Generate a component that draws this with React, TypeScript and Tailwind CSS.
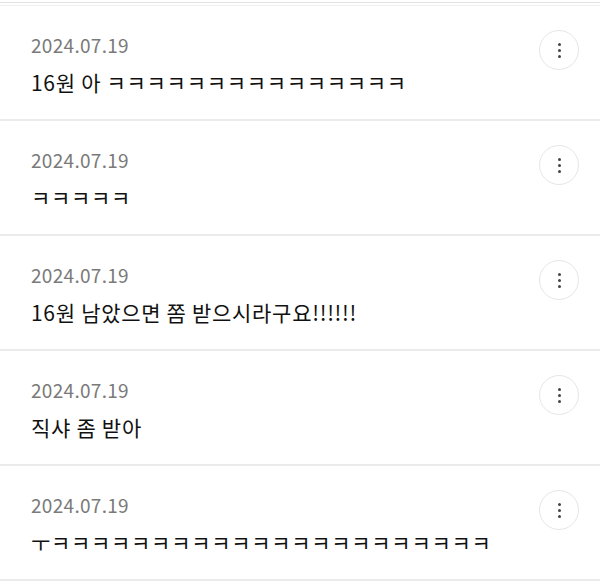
import { useState } from 'react'

interface Comment {
  id: number
  date: string
  text: string
}

const comments: Comment[] = [
  { id: 1, date: '2024.07.19', text: '16원 아 ' + 'ㅋ'.repeat(15) },
  { id: 2, date: '2024.07.19', text: 'ㅋ'.repeat(5) },
  { id: 3, date: '2024.07.19', text: '16원 남았으면 쫌 받으시라구요!!!!!!' },
  { id: 4, date: '2024.07.19', text: '직샤 좀 받아' },
  { id: 5, date: '2024.07.19', text: 'ㅜ' + 'ㅋ'.repeat(22) },
]

function MoreButton() {
  return (
    <button className="w-10 h-10 rounded-full border border-[#e6e6e6] flex flex-col items-center justify-center gap-[3px] bg-white shrink-0">
      <span className="w-[3px] h-[3px] rounded-full bg-[#444]" />
      <span className="w-[3px] h-[3px] rounded-full bg-[#444]" />
      <span className="w-[3px] h-[3px] rounded-full bg-[#444]" />
    </button>
  )
}

export default function App() {
  const [list] = useState(comments)

  return (
    <div
      className="w-[600px] h-[588px] bg-white overflow-hidden"
      style={{ fontFamily: '"Noto Sans CJK KR", "Noto Sans", sans-serif' }}
    >
      <div className="h-[6px] pt-[2px]">
        <div className="h-px bg-[#e4e4e4]" />
        <div className="h-[2px]" />
        <div className="h-px bg-[#efefef]" />
      </div>
      {list.map((c) => (
        <div key={c.id} className="h-[115px] border-b-2 border-[#ebebeb] flex justify-between pl-[31px] pr-[21px]">
          <div className="pt-[27px]">
            <div className="text-[19px] leading-[24px] tracking-[0.3px] text-[#7a7a7a]">{c.date}</div>
            <div className="mt-[11px] text-[21px] leading-[28px] tracking-[0.7px] text-[#111]">{c.text}</div>
          </div>
          <div className="pt-[24px]">
            <MoreButton />
          </div>
        </div>
      ))}
    </div>
  )
}
